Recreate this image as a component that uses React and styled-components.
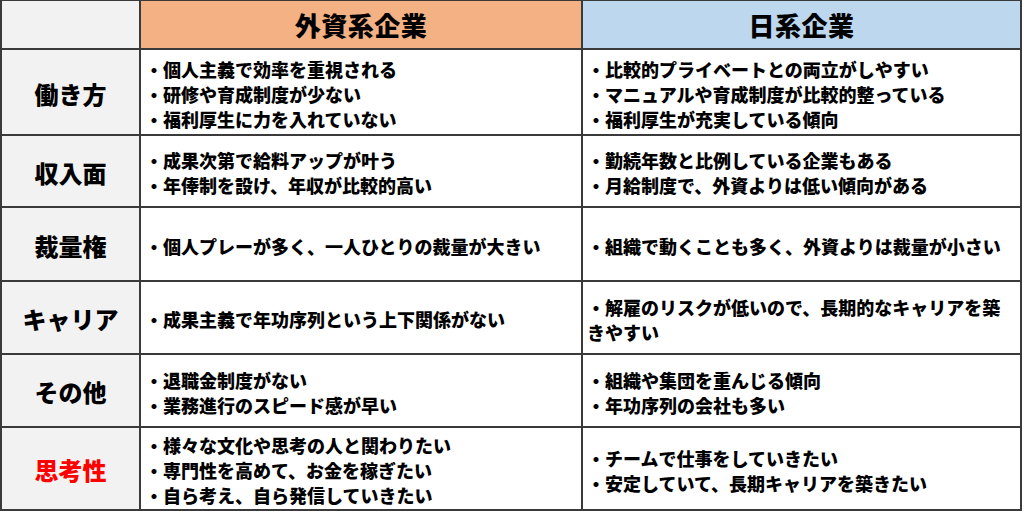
import React from 'react';
import styled, { createGlobalStyle } from 'styled-components';

const GlobalStyle = createGlobalStyle`
  html, body {
    margin: 0;
    padding: 0;
    background: #ffffff;
  }
  body {
    font-family: "Noto Sans CJK JP", "Noto Sans", sans-serif;
  }
`;

const Table = styled.div`
  width: 1022px;
  box-sizing: border-box;
  display: grid;
  grid-template-columns: 137px 440px 1fr;
  grid-template-rows: 47px 84px 70px 72px 71px 71px 81px;
  gap: 2px;
  background: #3a3a3a;
  border: 2px solid #3a3a3a;
  border-top-width: 1px;
`;

const Corner = styled.div`
  background: #f2f2f2;
`;

const HeadCell = styled.div`
  background: ${(p) => p.$bg};
  display: flex;
  align-items: center;
  justify-content: center;
  font-size: 26px;
  font-weight: 900;
  color: #000;
  letter-spacing: 0.5px;
`;

const LabelCell = styled.div`
  background: #f2f2f2;
  display: flex;
  align-items: center;
  justify-content: center;
  padding-top: 2px;
  font-size: 24px;
  font-weight: 900;
  color: ${(p) => (p.$red ? '#ff0000' : '#000')};
`;

const BodyCell = styled.div`
  background: #ffffff;
  display: flex;
  flex-direction: column;
  justify-content: center;
  padding: 4px 8px 0 4px;
  font-size: 18px;
  font-weight: 900;
  line-height: 25px;
  color: #000;
`;

const Line = styled.div``;

const rows = [
  {
    label: '働き方',
    gaishi: ['・個人主義で効率を重視される', '・研修や育成制度が少ない', '・福利厚生に力を入れていない'],
    nikkei: ['・比較的プライベートとの両立がしやすい', '・マニュアルや育成制度が比較的整っている', '・福利厚生が充実している傾向'],
  },
  {
    label: '収入面',
    gaishi: ['・成果次第で給料アップが叶う', '・年俸制を設け、年収が比較的高い'],
    nikkei: ['・勤続年数と比例している企業もある', '・月給制度で、外資よりは低い傾向がある'],
  },
  {
    label: '裁量権',
    gaishi: ['・個人プレーが多く、一人ひとりの裁量が大きい'],
    nikkei: ['・組織で動くことも多く、外資よりは裁量が小さい'],
  },
  {
    label: 'キャリア',
    gaishi: ['・成果主義で年功序列という上下関係がない'],
    nikkei: ['・解雇のリスクが低いので、長期的なキャリアを築きやすい'],
  },
  {
    label: 'その他',
    gaishi: ['・退職金制度がない', '・業務進行のスピード感が早い'],
    nikkei: ['・組織や集団を重んじる傾向', '・年功序列の会社も多い'],
  },
  {
    label: '思考性',
    red: true,
    gaishi: ['・様々な文化や思考の人と関わりたい', '・専門性を高めて、お金を稼ぎたい', '・自ら考え、自ら発信していきたい'],
    nikkei: ['・チームで仕事をしていきたい', '・安定していて、長期キャリアを築きたい'],
  },
];

export default function App() {
  return (
    <>
      <GlobalStyle />
      <Table>
        <Corner />
        <HeadCell $bg="#f4b183">外資系企業</HeadCell>
        <HeadCell $bg="#bdd7ee">日系企業</HeadCell>
        {rows.map((r) => (
          <React.Fragment key={r.label}>
            <LabelCell $red={r.red}>{r.label}</LabelCell>
            <BodyCell>
              {r.gaishi.map((t) => (
                <Line key={t}>{t}</Line>
              ))}
            </BodyCell>
            <BodyCell>
              {r.nikkei.map((t) => (
                <Line key={t}>{t}</Line>
              ))}
            </BodyCell>
          </React.Fragment>
        ))}
      </Table>
    </>
  );
}
